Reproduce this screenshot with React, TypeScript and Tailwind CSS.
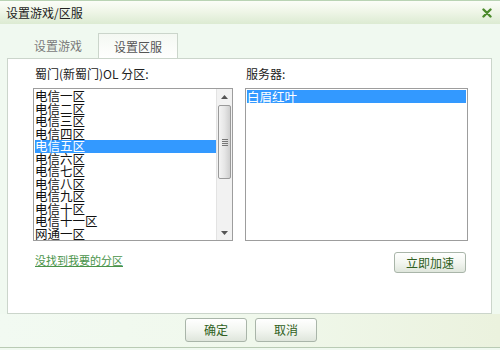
import { useState } from 'react';

const zones = [
  '电信一区',
  '电信二区',
  '电信三区',
  '电信四区',
  '电信五区',
  '电信六区',
  '电信七区',
  '电信八区',
  '电信九区',
  '电信十区',
  '电信十一区',
  '网通一区',
];

const font = { fontFamily: '"Noto Sans CJK SC", "Liberation Sans", sans-serif' };

function Button({ label, className = '' }: { label: string; className?: string }) {
  return (
    <button
      className={`flex items-center justify-center rounded-[3px] border border-[#a9b5a9] bg-gradient-to-b from-[#ffffff] via-[#f3f6f1] to-[#dfe6dc] text-[12px] text-[#2f5f22] ${className}`}
    >
      {label}
    </button>
  );
}

function ScrollBar() {
  return (
    <div className="flex w-[16px] flex-col border-l border-[#e3e3e3] bg-[#f2f2f2]">
      <div className="flex h-[16px] items-center justify-center">
        <svg width="7" height="4" viewBox="0 0 7 4">
          <path d="M0 4 L3.5 0 L7 4 Z" fill="#555" />
        </svg>
      </div>
      <div className="mx-[1px] flex h-[74px] items-center justify-center rounded-[2px] border border-[#9a9a9a] bg-gradient-to-r from-[#f4f4f4] via-[#e6e6e6] to-[#cfcfcf]">
        <div className="flex flex-col gap-[1px]">
          <div className="h-[1px] w-[6px] bg-[#777]" />
          <div className="h-[1px] w-[6px] bg-[#777]" />
          <div className="h-[1px] w-[6px] bg-[#777]" />
          <div className="h-[1px] w-[6px] bg-[#777]" />
        </div>
      </div>
      <div className="flex-1" />
      <div className="flex h-[14px] items-center justify-center">
        <svg width="7" height="4" viewBox="0 0 7 4">
          <path d="M0 0 L3.5 4 L7 0 Z" fill="#555" />
        </svg>
      </div>
    </div>
  );
}

export default function App() {
  const [zone, setZone] = useState(4);

  return (
    <div style={font} className="flex h-[350px] w-[500px] flex-col overflow-hidden bg-[#f0f9f0]">
      <div className="flex h-[24px] items-center justify-between border-t border-[#b9d3b4] bg-gradient-to-b from-[#fbfdf8] via-[#eef5e6] to-[#dcebd2] pl-[6px] pr-[8px]">
        <span className="text-[12px] text-[#222]">设置游戏/区服</span>
        <svg width="10" height="10" viewBox="0 0 10 10">
          <path d="M1.5 1.5 L8.5 8.5 M8.5 1.5 L1.5 8.5" stroke="#4c8a2c" strokeWidth="2.4" strokeLinecap="round" />
        </svg>
      </div>

      <div className="flex h-[34px] items-end pl-[19px] pt-[9px]">
        <div className="flex h-[25px] w-[78px] items-center justify-center text-[12px] text-[#7a7a7a]">设置游戏</div>
        <div className="-mb-[1px] ml-[1px] flex h-[26px] w-[80px] items-center justify-center border border-b-0 border-[#cbd5cb] bg-gradient-to-b from-[#f4f8f2] to-[#ffffff] text-[12px] text-[#555]">
          设置区服
        </div>
      </div>

      <div className="ml-[7px] flex h-[256px] w-[485px] border border-[#cbd5cb] bg-white pl-[25px] pt-[7px]">
        <div className="flex w-[200px] flex-col">
          <div className="h-[22px] pl-[2px] text-[12px] leading-[16px] text-[#222]">蜀门(新蜀门)OL 分区:</div>
          <div className="flex h-[153px] border border-[#9d9d9d] bg-white">
            <div className="flex-1 overflow-hidden pl-[1px] pt-[1px]">
              {zones.map((z, i) => (
                <div
                  key={z}
                  onClick={() => setZone(i)}
                  className={`h-[12.5px] whitespace-nowrap text-[12.5px] leading-[12.5px] ${
                    i === zone ? 'bg-[#3399ff] text-white' : 'text-[#111]'
                  }`}
                >
                  {z}
                </div>
              ))}
            </div>
            <ScrollBar />
          </div>
          <a className="mt-[11px] pl-[2px] text-[11px] text-[#4a944a] underline">没找到我要的分区</a>
        </div>

        <div className="ml-[12px] flex w-[223px] flex-col">
          <div className="h-[22px] pl-[1px] text-[12px] leading-[16px] text-[#222]">服务器:</div>
          <div className="h-[153px] border border-[#9d9d9d] bg-white p-[1px]">
            <div className="h-[13px] whitespace-nowrap bg-[#3399ff] text-[12.5px] leading-[13px] text-white">白眉红叶</div>
          </div>
          <div className="mt-[11px] flex justify-end pr-[2px]">
            <Button label="立即加速" className="h-[21px] w-[72px]" />
          </div>
        </div>
      </div>

      <div className="flex flex-1 items-start justify-center gap-[8px] border-b border-[#b9cbb4] bg-gradient-to-r from-[#f2faf2] via-[#f0f8ec] to-[#ebf2de] pl-[2px] pt-[4px]">
        <Button label="确定" className="h-[24px] w-[62px]" />
        <Button label="取消" className="h-[24px] w-[62px]" />
      </div>
      <div className="h-[2px] bg-[#f0f9f0]" />
    </div>
  );
}
